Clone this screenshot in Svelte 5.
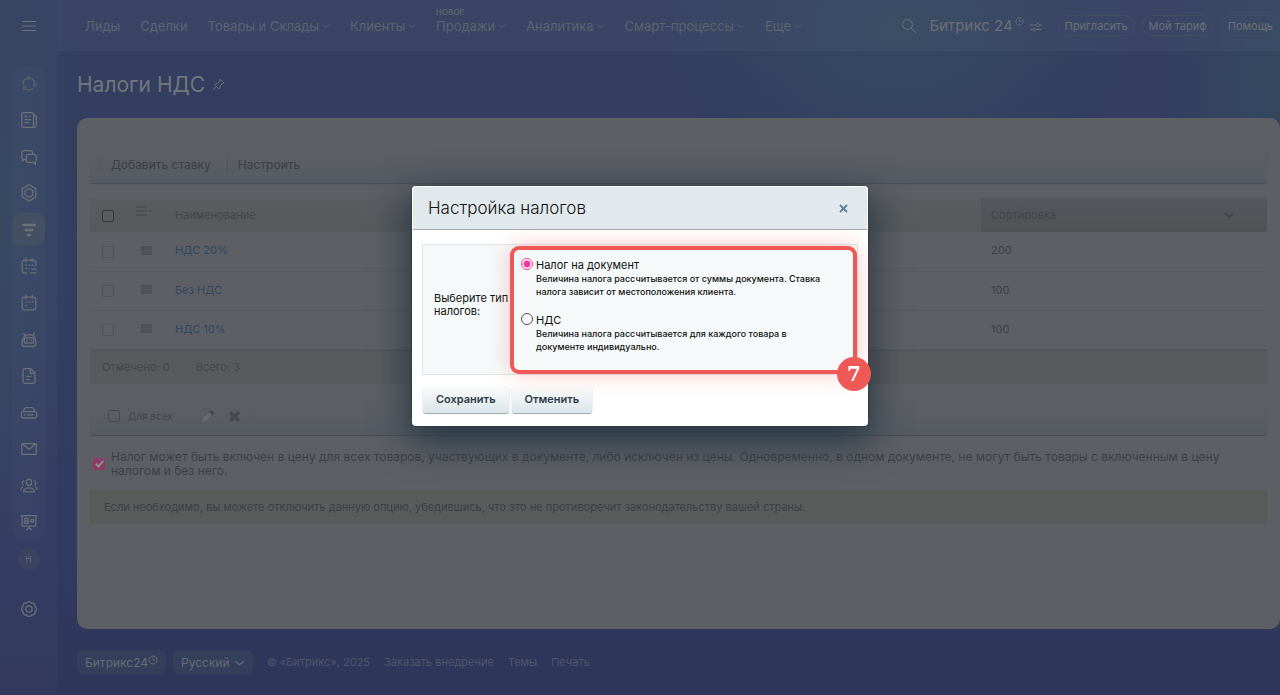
<script lang="ts">
    const nav = [
        { label: 'Лиды', menu: false },
        { label: 'Сделки', menu: false },
        { label: 'Товары и Склады', menu: true },
        { label: 'Клиенты', menu: true },
        { label: 'Продажи', menu: true, tag: 'НОВОЕ' },
        { label: 'Аналитика', menu: true },
        { label: 'Смарт-процессы', menu: true },
        { label: 'Еще', menu: true }
    ];

    const side = [
        { name: 'Процессы', d: 'M8 5a6.500 6.500 0 0 0-3.300 7M13 4.500a6.500 6.500 0 0 1 4 4M15.800 15.500a6.500 6.500 0 0 1-7 1.500M10.300 3a1.500 1.500 0 1 0 .1 0M6.200 14a1.500 1.500 0 1 0 .1 0M17.300 10.300a1.500 1.500 0 1 0 .1 0', faint: true },
        { name: 'Лента', d: 'M5 3h9a2 2 0 0 1 2 2v12a2 2 0 0 1-2 2H5a2 2 0 0 1-2-2V5a2 2 0 0 1 2-2zM16 6h1a2 2 0 0 1 2 2v9a2 2 0 0 1-2 2h-3M6 7h3M11 7h2M7.500 6v2M6 10.500h7M6 14h5' },
        { name: 'Чаты', d: 'M8 13.500H6l-2 1.500v-2.500a2 2 0 0 1-1-1.700V6.500A2.500 2.500 0 0 1 5.500 4h7A2.500 2.500 0 0 1 15 6.500V8M10.500 8h6A2.500 2.500 0 0 1 19 10.500v4a2 2 0 0 1-1 1.800V19l-2.500-2h-5A2.500 2.500 0 0 1 8 14.500v-4A2.500 2.500 0 0 1 10.500 8z' },
        { name: 'Коллабы', d: 'M11 2l7.500 4.300v9L11 19.700l-7.500-4.400v-9zM11 6l4.200 2.400v5L11 15.800l-4.200-2.400v-5z' },
        { name: 'CRM', d: 'M4 5h14M7 11h8M9.500 17h3', active: true },
        { name: 'Задачи', d: 'M9 18.500H6A2.500 2.500 0 0 1 3.500 16V7A2.500 2.500 0 0 1 6 4.500h10A2.500 2.500 0 0 1 18.500 7v4M7.500 2v5M14.500 2v5M7 10h2M10.500 10h2M14 10h2M7 14h2M10.500 14h1M13.500 14.500h6M12 18.500h7.500' },
        { name: 'Календарь', d: 'M6 4.500h10A2.500 2.500 0 0 1 18.500 7v9.500a2 2 0 0 1-2 2h-11a2 2 0 0 1-2-2V7A2.500 2.500 0 0 1 6 4.500zM7.500 2v5M14.500 2v5M7 10h2M10.500 10h2M14 10h2M7 14h2' },
        { name: 'CoPilot', d: 'M5 3l1.500 3M17 3l-1.500 3M11 5c4 0 7.500 3 7.500 7v3a3 3 0 0 1-3 3h-9a3 3 0 0 1-3-3v-3c0-4 3.500-7 7.500-7zM8.500 8.500h5a3 3 0 0 1 0 6h-5a3 3 0 0 1 0-6zM8.500 10.500v2M13.500 10.500v2' },
        { name: 'Документы', d: 'M6.500 3H13l4.500 4.500V17a2 2 0 0 1-2 2h-9a2 2 0 0 1-2-2V5a2 2 0 0 1 2-2zM12.500 3v5h5M8 11.500h5.500M8 15h4' },
        { name: 'Диск', d: 'M4.500 9.500L6 6.500A2 2 0 0 1 8 5h6a2 2 0 0 1 2 1.500l1.500 3M4.500 9.500h13a2 2 0 0 1 2 2v3a2 2 0 0 1-2 2h-13a2 2 0 0 1-2-2v-3a2 2 0 0 1 2-2zM5.500 13h2M9 13h7' },
        { name: 'Почта', d: 'M4 5h14a1 1 0 0 1 1 1v10a1 1 0 0 1-1 1H4a1 1 0 0 1-1-1V6a1 1 0 0 1 1-1zM4 5.500l7 6 7-6' },
        { name: 'Сотрудники', d: 'M11 3.500c4 0 3.500 7 0 7s-4-7 0-7zM5 17.500c0-6 12-6 12 0zM6 5c-3 0-3 4-1 5M16 5c3 0 3 4 1 5M4.500 12C2.500 12.800 2 14 2 15.500M17.500 12c2 .8 2.500 2 2.500 3.500' },
        { name: 'Доска', d: 'M2 4h18M3.500 4v11.500h15V4M11 15.500V18M8 20l3-3 3 3M6.500 7H10v5.500H6.500zM6.500 9.800H10M14.400 8a1.700 1.700 0 1 0 .1 0' }
    ];

    const rates = [
        { name: 'НДС 20%', sort: 200 },
        { name: 'Без НДС', sort: 100 },
        { name: 'НДС 10%', sort: 100 }
    ];

    const kinds = [
        { id: 'doc', title: 'Налог на документ', text: 'Величина налога рассчитывается от суммы документа. Ставка налога зависит от местоположения клиента.' },
        { id: 'vat', title: 'НДС', text: 'Величина налога рассчитывается для каждого товара в документе индивидуально.' }
    ];

    let kind = $state('doc');
    let included = $state(true);
</script>

{#snippet chevron(size)}
    <svg class="chev" width={size} height={size} viewBox="0 0 10 10"><path d="M1 3.500l4 3.500 4-3.500" /></svg>
{/snippet}

{#snippet clock(size)}
    <svg class="clock" width={size} height={size} viewBox="0 0 10 10"><path d="M5 1a4 4 0 1 0 .1 0M5 3v2.200h2" /></svg>
{/snippet}

<div class="page">
    <aside>
        <button class="burger" aria-label="Меню">
            <svg width="14" height="12" viewBox="0 0 14 12"><path d="M0 1.500h14M0 6h14M0 10.500h14" /></svg>
        </button>
        <nav class="menu">
            {#each side as item}
                <a href="#{item.name}" aria-label={item.name} class:active={item.active} class:faint={item.faint}>
                    <svg width="20" height="20" viewBox="0 0 22 22"><path d={item.d} /></svg>
                </a>
            {/each}
        </nav>
        <a class="avatar" href="#profile">Н</a>
        <a class="gear" href="#settings" aria-label="Настройки">
            <svg width="20" height="20" viewBox="0 0 22 22">
                <path d="M8.300 4.500a3 3 0 0 1 5.400 0a3 3 0 0 1 3.800 3.800a3 3 0 0 1 0 5.400a3 3 0 0 1-3.800 3.800a3 3 0 0 1-5.400 0a3 3 0 0 1-3.800-3.800a3 3 0 0 1 0-5.400a3 3 0 0 1 3.800-3.800z" />
                <circle cx="11" cy="11" r="3.500" />
            </svg>
        </a>
    </aside>

    <div class="main">
        <header>
            <nav class="top">
                {#each nav as item}
                    <a href="#{item.label}">
                        {#if item.tag}<span class="tag">{item.tag}</span>{/if}
                        {item.label}{#if item.menu}{@render chevron(8)}{/if}
                    </a>
                {/each}
            </nav>
            <div class="tools">
                <button class="search" aria-label="Поиск">
                    <svg width="16" height="16" viewBox="0 0 16 16"><circle cx="6.500" cy="6.500" r="5" /><path d="M10.200 10.200L15 15" /></svg>
                </button>
                <a class="brand" href="#portal">Битрикс 24{@render clock(9)}</a>
                <svg class="sliders" width="12" height="10" viewBox="0 0 12 10"><path d="M0 3h6M10 3h2M0 7.500h2M6 7.500h6M8 1.500a1.500 1.500 0 1 0 .1 0M4 6a1.500 1.500 0 1 0 .1 0" /></svg>
                <button class="pill">Пригласить</button>
                <button class="pill">Мой тариф</button>
                <button class="pill">Помощь</button>
            </div>
        </header>

        <div class="title">
            <h1>Налоги НДС</h1>
            <svg width="13" height="13" viewBox="0 0 13 13"><path d="M8 1l4 4-1.500.5L8 8l.2 2L7 11 2.500 6.500l1-1 2 .2L8 3zM4.500 8.500L1 12" /></svg>
        </div>

        <main>
            <div class="bar toolbar">
                <i class="grip"></i>
                <button>Добавить ставку</button>
                <i class="sep"></i>
                <button>Настроить</button>
            </div>

            <table>
                <thead>
                    <tr>
                        <th class="c-check"><input type="checkbox" aria-label="Выбрать все" /></th>
                        <th class="c-menu">
                            <svg width="17" height="10" viewBox="0 0 17 10"><path d="M0 1h11M0 5h11M0 9h11" /><path class="tip" d="M12 4h4l-2 2z" /></svg>
                        </th>
                        <th>Наименование</th>
                        <th class="c-sort"><span>Сортировка {@render chevron(10)}</span></th>
                    </tr>
                </thead>
                <tbody>
                    {#each rates as rate}
                        <tr>
                            <td class="c-check"><input type="checkbox" aria-label={rate.name} /></td>
                            <td class="c-menu"><svg width="11" height="9" viewBox="0 0 11 9"><path d="M0 1h11M0 3.300h11M0 5.700h11M0 8h11" /></svg></td>
                            <td><a href="#{rate.name}">{rate.name}</a></td>
                            <td class="c-sort">{rate.sort}</td>
                        </tr>
                    {/each}
                </tbody>
            </table>
            <div class="totals"><span>Отмечено: 0</span><span>Всего: 3</span></div>

            <div class="bar actions">
                <label><input type="checkbox" />Для всех</label>
                <button aria-label="Редактировать">
                    <svg width="15" height="15" viewBox="0 0 16 16"><path class="body" d="M2 10l8-8 4 4-8 8-5 1z" /><path class="tip" d="M10 2c2-2 6 1 4.500 3.500L13 7 9 3z" /></svg>
                </button>
                <button aria-label="Удалить">
                    <svg width="13" height="13" viewBox="0 0 14 14"><path class="tip" d="M1 3.500L3.500 1 7 4l3.500-3L13 3.500 10 7l3 3.500-2.500 2.500L7 10l-3.500 3L1 10.500 4 7z" /></svg>
                </button>
            </div>

            <label class="include">
                <input type="checkbox" bind:checked={included} />
                <span>Налог может быть включен в цену для всех товаров, участвующих в документе, либо исключен из цены. Одновременно, в одном документе, не могут быть товары с включенным в цену налогом и без него.</span>
            </label>
            <p class="note">Если необходимо, вы можете отключить данную опцию, убедившись, что это не противоречит законодательству вашей страны.</p>
        </main>

        <footer>
            <a class="chip" href="#bitrix">Битрикс24{@render clock(10)}</a>
            <button class="chip">Русский {@render chevron(11)}</button>
            <span>© «Битрикс», 2025</span>
            <a href="#order">Заказать внедрение</a>
            <a href="#themes">Темы</a>
            <a href="#print">Печать</a>
        </footer>
    </div>

    <div class="dialog" role="dialog" aria-labelledby="dialog-title">
        <div class="dialog-head">
            <h2 id="dialog-title">Настройка налогов</h2>
            <button aria-label="Закрыть"><svg width="9" height="9" viewBox="0 0 9 9"><path d="M1 1l7 7M8 1L1 8" /></svg></button>
        </div>
        <div class="dialog-body">
            <div class="form">
                <div class="caption" id="kind-caption">Выберите тип налогов:</div>
                <div class="kinds" role="radiogroup" aria-labelledby="kind-caption">
                    {#each kinds as k}
                        <label>
                            <input type="radio" name="kind" value={k.id} bind:group={kind} />
                            <span class="kind"><b>{k.title}</b><small>{k.text}</small></span>
                        </label>
                    {/each}
                    <div class="step">7</div>
                </div>
            </div>
            <div class="buttons">
                <button>Сохранить</button>
                <button>Отменить</button>
            </div>
        </div>
    </div>
</div>

<style>
    :global(body) {
        background: #303759;
    }
    .page {
        position: relative;
        display: flex;
        min-height: 100vh;
        overflow: hidden;
        font-family: Inter, "Liberation Sans", sans-serif;
        font-size: 12px;
        color: #6c7078;
        background:
            radial-gradient(ellipse 240px 160px at 900px 30px, #344960, transparent),
            radial-gradient(ellipse 120px 160px at 1280px 80px, #34495f, transparent),
            radial-gradient(ellipse 90px 360px at 0 220px, #35475f, transparent),
            linear-gradient(#343f60, #323d60 35%, #303a5f 80%, #2e3659);
    }
    a {
        color: inherit;
        text-decoration: none;
    }
    button {
        font: inherit;
        color: inherit;
        background: none;
        border: 0;
        padding: 0;
    }
    svg {
        display: block;
        fill: none;
        stroke: currentColor;
        flex: none;
    }
    input {
        appearance: none;
        flex: none;
        box-sizing: border-box;
        width: 12px;
        height: 12px;
        margin: 0;
        border: 1px solid #484b50;
        border-radius: 2px;
    }

    aside {
        box-sizing: border-box;
        width: 57px;
        flex: none;
        display: flex;
        flex-direction: column;
        align-items: center;
        padding: 18px 0 76px;
        background: rgba(255, 255, 255, 0.02);
    }
    .burger {
        margin-bottom: 34px;
        height: 15px;
    }
    .menu {
        flex: 1;
        display: flex;
        flex-direction: column;
        justify-content: space-between;
        border-radius: 10px;
        background: rgba(255, 255, 255, 0.02);
    }
    .menu a {
        display: flex;
        align-items: center;
        justify-content: center;
        width: 33px;
        height: 33px;
        border-radius: 9px;
    }
    .menu svg, .gear svg {
        stroke-width: 1.4;
    }
    .menu .active {
        background: #434f62;
    }
    .menu .active svg {
        width: 18px;
        stroke-width: 3;
        stroke-linecap: round;
    }
    .faint {
        opacity: 0.7;
    }
    .avatar {
        width: 22px;
        height: 22px;
        margin-top: 9px;
        border-radius: 50%;
        background: #3c4360;
        font-size: 8px;
        line-height: 22px;
        text-align: center;
    }
    .gear {
        margin-top: 29px;
        height: 20px;
    }

    .main {
        flex: 1;
        min-width: 0;
        display: flex;
        flex-direction: column;
    }
    header {
        height: 51px;
        display: flex;
        align-items: center;
        justify-content: space-between;
        padding-left: 28px;
        background: rgba(255, 255, 255, 0.03);
        white-space: nowrap;
    }
    .top, .top a, .tools {
        display: flex;
        align-items: center;
    }
    .top {
        gap: 20px;
        font-size: 13px;
        color: #5d6370;
    }
    .top a {
        position: relative;
        gap: 3px;
    }
    .tag {
        position: absolute;
        left: 0;
        top: -10px;
        font-size: 8px;
        line-height: 8px;
        font-weight: 600;
    }
    .search {
        margin-right: 13px;
    }
    .brand {
        display: flex;
        font-size: 15px;
        gap: 2px;
    }
    .brand .clock {
        margin-top: 1px;
    }
    .sliders {
        margin: 2px 16px 0 6px;
    }
    .pill {
        height: 21px;
        padding: 0 6px;
        margin-right: 7px;
        border: 1px solid #434d64;
        border-radius: 11px;
        font-size: 11px;
    }
    .pill:last-child {
        margin-right: 0;
    }
    .title {
        height: 67px;
        display: flex;
        align-items: center;
        gap: 7px;
        padding-left: 20px;
    }
    h1 {
        margin: 0;
        font-size: 21px;
        font-weight: 400;
        color: #73767c;
    }

    main {
        flex: 1;
        box-sizing: border-box;
        margin-left: 20px;
        padding: 29px 13px 0;
        border-radius: 10px;
        background: #5e5f64;
        color: #3b3f46;
    }
    .bar {
        display: flex;
        align-items: center;
        box-sizing: border-box;
        border-radius: 3px;
        background: linear-gradient(#5e5f63, #565b63);
        box-shadow: 0 1px 1px #464c52;
    }
    .toolbar {
        height: 36px;
        margin-bottom: 15px;
        padding: 0 0 2px 9px;
    }
    .grip {
        width: 2px;
        height: 15px;
        margin-right: 8px;
        border: solid #54575c;
        border-width: 0 1px;
    }
    .sep {
        width: 1px;
        height: 15px;
        margin: 0 10px 0 16px;
        background: #50545a;
    }
    table {
        width: 100%;
        border-collapse: collapse;
        table-layout: fixed;
    }
    th {
        height: 34px;
        box-sizing: border-box;
        padding: 0;
        background: linear-gradient(#5a5c60, #57595c);
        color: #42464b;
        font-size: 11px;
        font-weight: 400;
        text-align: left;
    }
    th.c-sort {
        background: linear-gradient(#53585c, #515256);
        border-radius: 0 3px 3px 0;
    }
    .c-sort span {
        display: flex;
        align-items: center;
        justify-content: space-between;
        padding-right: 33px;
    }
    td {
        height: 39px;
        box-sizing: border-box;
        padding: 0 0 2px;
        border-bottom: 1px solid #595b5f;
        font-size: 11px;
    }
    td a {
        color: #304663;
    }
    .c-check {
        width: 46px;
        padding-left: 12px;
    }
    .c-menu {
        width: 39px;
        color: #4d5055;
    }
    td.c-menu {
        padding-left: 5px;
    }
    td.c-menu svg {
        stroke-width: 2;
    }
    th .chev {
        stroke-width: 2;
    }
    .c-sort {
        width: 286px;
        padding-left: 10px;
        box-sizing: border-box;
    }
    th.c-check, th.c-menu {
        box-sizing: border-box;
    }
    th.c-menu svg {
        margin-bottom: 8px;
        stroke-width: 2;
    }
    td input {
        border-color: #515459;
        vertical-align: -4px;
    }
    th input {
        vertical-align: -3px;
        border-color: #33373c;
    }
    .totals {
        display: flex;
        gap: 26px;
        height: 33px;
        line-height: 32px;
        padding-left: 12px;
        border-top: 1px solid #4f5257;
        border-radius: 0 0 3px 3px;
        background: #595a5e;
        font-size: 11px;
        color: #43464b;
    }
    .actions {
        height: 37px;
        margin: 14px 0 15px;
        padding-left: 18px;
        font-size: 10px;
        color: #43474c;
    }
    .actions label {
        display: flex;
        align-items: center;
        gap: 8px;
        margin-right: 27px;
    }
    .actions button {
        margin-right: 13px;
    }
    .body {
        fill: #696a6e;
        stroke: #505357;
    }
    .tip {
        fill: #47494d;
        stroke: none;
    }
    .include {
        display: flex;
        align-items: center;
        gap: 6px;
        padding: 0 40px 0 3px;
        line-height: 14px;
    }
    .include input:checked {
        border: 0;
        background: #8a3c67;
    }
    .include input:checked::after {
        content: '';
        display: block;
        width: 3px;
        height: 6px;
        margin: 1px 0 0 4px;
        border: solid #8f8f93;
        border-width: 0 2px 2px 0;
        transform: rotate(40deg);
    }
    .note {
        margin: 12px 0 0;
        padding: 8px 13px;
        border: 1px solid #575953;
        background: #5a5b5b;
        font-size: 11px;
        line-height: 16px;
    }

    footer {
        display: flex;
        align-items: center;
        box-sizing: border-box;
        height: 66px;
        padding-left: 20px;
        gap: 14px;
        font-size: 11px;
        color: #50566a;
        white-space: nowrap;
    }
    .chip {
        display: flex;
        align-items: center;
        gap: 4px;
        height: 24px;
        padding: 0 8px;
        margin-right: -7px;
        border-radius: 6px;
        background: #343f5b;
        color: #686c76;
        font-size: 12px;
    }
    button.chip {
        margin-right: 0;
    }
    a.chip {
        gap: 0;
    }
    a.chip .clock {
        margin-bottom: 4px;
    }

    .dialog {
        position: absolute;
        top: 186px;
        left: 50%;
        width: 456px;
        transform: translateX(-50%);
        border-radius: 4px;
        background: #fff;
        color: #111;
        font-size: 11px;
        box-shadow: 0 0 2px #26323c, 0 12px 36px 4px #263743;
    }
    .dialog-head {
        display: flex;
        align-items: center;
        justify-content: space-between;
        box-sizing: border-box;
        height: 44px;
        padding: 0 19px 0 15px;
        border: 1px solid #fff;
        border-bottom-color: #a5acb0;
        border-radius: 4px 4px 0 0;
        background: #e1e9ec;
    }
    h2 {
        margin: 0;
        font-size: 17px;
        font-weight: 300;
    }
    .dialog-head svg {
        color: #6a7d99;
        stroke-width: 2;
    }
    .dialog-body {
        padding: 14px 10px 13px;
    }
    .form {
        display: flex;
        align-items: center;
        border: 1px solid #dce7ee;
        background: #f5f9f9;
    }
    .caption {
        width: 76px;
        padding: 0 0 10px 11px;
        line-height: 13px;
    }
    .kinds {
        position: relative;
        flex: 1;
        box-sizing: border-box;
        height: 128px;
        margin: 1px 0 0;
        padding: 8px 18px 0 7px;
        border: 4px solid #ee5856;
        border-radius: 9px;
        background: #f5f9f9;
        box-shadow: 0 0 22px rgba(255, 80, 80, 0.3);
    }
    .kinds label {
        display: flex;
        gap: 3px;
        margin-bottom: 15px;
    }
    .kinds input {
        border-color: #555;
        border-radius: 50%;
    }
    .kinds input:checked {
        border-color: #f5389b;
        background: radial-gradient(#f5389b 3px, #fff 4px);
    }
    .kind b, .kind small {
        display: block;
        line-height: 13px;
    }
    .kind b {
        padding-top: 1px;
        font-weight: 400;
    }
    .kind small {
        font-size: 9px;
        font-weight: 500;
    }
    .step {
        position: absolute;
        right: -18px;
        bottom: -21px;
        width: 34px;
        height: 34px;
        border-radius: 50%;
        background: #ee5856;
        color: #fff;
        font: 900 20px/34px "DejaVu Serif", serif;
        text-align: center;
    }
    .buttons {
        display: flex;
        gap: 3px;
        margin: 12px 0 0 1px;
    }
    .buttons button {
        height: 26px;
        padding: 0 13px 2px;
        border-radius: 3px;
        background: linear-gradient(#fafcfc, #dbe5e8);
        box-shadow: 0 1px 1px #9aa5ab, 0 0 1px #b4bec3;
        font-weight: 600;
        color: #2f3b47;
    }
</style>
